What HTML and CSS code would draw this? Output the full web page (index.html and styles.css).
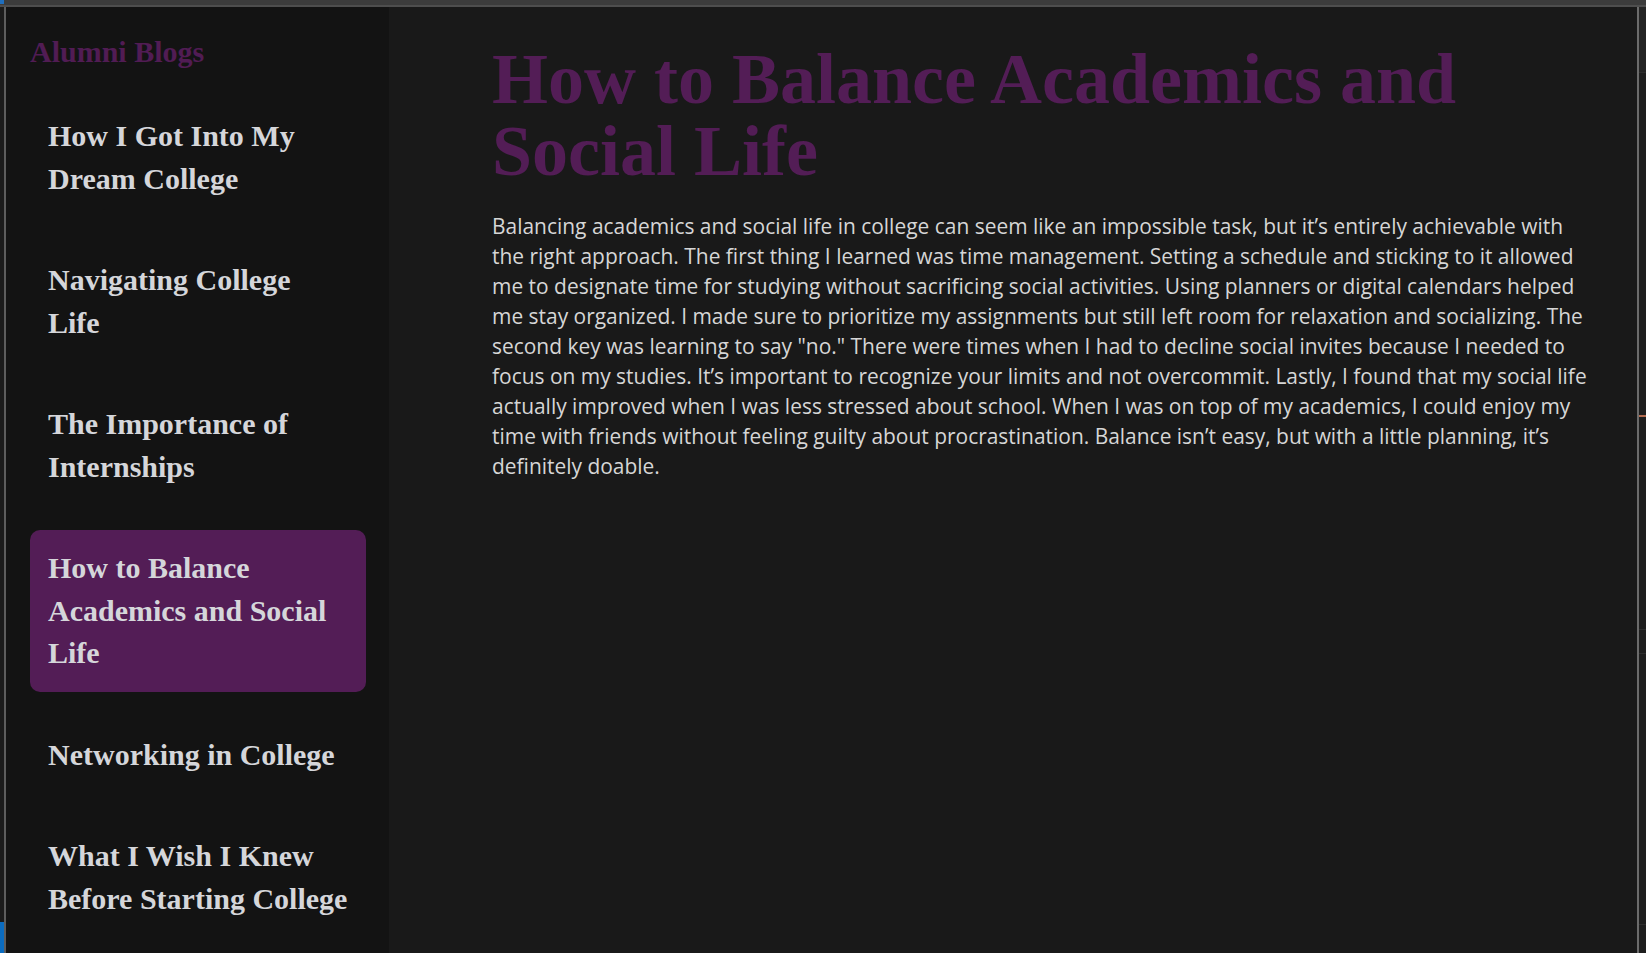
FILE: index.html
```html
<!DOCTYPE html>
<html lang="en">
<head>
<meta charset="utf-8">
<title>Alumni Blogs</title>
<link rel="stylesheet" href="styles.css">
</head>
<body>
<div class="screen">
  <div class="titlebar"><span class="tb-accent"></span></div>
  <div class="window">
    <div class="edge-left"><div class="edge-fill"></div><div class="edge-blue"></div></div>
    <div class="edge-line"></div>
    <aside class="sidebar">
      <h2 class="brand">Alumni Blogs</h2>
      <nav class="posts">
        <a class="post-link" href="#">How I Got Into My Dream College</a>
        <a class="post-link" href="#">Navigating College Life</a>
        <a class="post-link" href="#">The Importance of Internships</a>
        <a class="post-link active" href="#">How to Balance Academics and Social Life</a>
        <a class="post-link" href="#">Networking in College</a>
        <a class="post-link" href="#">What I Wish I Knew Before Starting College</a>
      </nav>
    </aside>
    <main class="article">
      <h1 class="article-title">How to Balance Academics and Social Life</h1>
      <p class="article-body">Balancing academics and social life in college can seem like an impossible task, but it’s entirely achievable with the right approach. The first thing I learned was time management. Setting a schedule and sticking to it allowed me to designate time for studying without sacrificing social activities. Using planners or digital calendars helped me stay organized. I made sure to prioritize my assignments but still left room for relaxation and socializing. The second key was learning to say "no." There were times when I had to decline social invites because I needed to focus on my studies. It’s important to recognize your limits and not overcommit. Lastly, I found that my social life actually improved when I was less stressed about school. When I was on top of my academics, I could enjoy my time with friends without feeling guilty about procrastination. Balance isn’t easy, but with a little planning, it’s definitely doable.</p>
    </main>
    <div class="edge-right">
      <div class="edge-right-line"></div>
      <div class="edge-right-fill">
        <div class="er-top"></div>
        <div class="er-rule"></div>
        <div class="er-gap er-gap-1"></div>
        <div class="er-tick"></div>
        <div class="er-gap er-gap-2"></div>
        <div class="er-rule"></div>
        <div class="er-gap er-gap-3"></div>
        <div class="er-rule"></div>
        <div class="er-gap er-gap-4"></div>
        <div class="er-rule"></div>
      </div>
    </div>
  </div>
</div>
</body>
</html>
```

FILE: styles.css
```css
html, body {
  margin: 0;
  padding: 0;
  height: 100%;
  overflow: hidden;
  background: #1e1e1e;
}

.screen {
  display: flex;
  flex-direction: column;
  height: 953px;
}

.titlebar {
  height: 7px;
  flex: none;
  display: flex;
  background: linear-gradient(#3c3c3c 0 5px, #4e4e4e 5px 7px);
}

.tb-accent {
  width: 4px;
  height: 4px;
  background: #1f6fbf;
}

.window {
  flex: 1;
  display: flex;
  min-height: 0;
}

.edge-left {
  width: 4px;
  flex: none;
  display: flex;
  flex-direction: column;
  background: #1b1b1b;
}

.edge-fill {
  flex: 1;
}

.edge-blue {
  height: 31px;
  background: #0b6cc0;
}

.edge-line {
  width: 2px;
  flex: none;
  background: #5d5d5d;
}

.sidebar {
  width: 383px;
  flex: none;
  box-sizing: border-box;
  padding: 27px 23px 0 24px;
  background: #131313;
}

.brand {
  margin: 0 0 29px;
  font: bold 30px/35px "Liberation Serif", "Times New Roman", serif;
  color: #511c54;
}

.posts {
  display: flex;
  flex-direction: column;
  gap: 25px;
}

.post-link {
  display: block;
  padding: 17px 18px;
  font: bold 30px/42.5px "Liberation Serif", "Times New Roman", serif;
  color: #d5d6da;
  text-decoration: none;
  border-radius: 10px;
}

.post-link.active {
  background: #531d56;
}

.article {
  flex: 1;
  min-width: 0;
  background: #191919;
  padding: 36px 47px 0 103px;
}

.article-title {
  margin: 0 0 24px;
  font: bold 72px/72px "Liberation Serif", "Times New Roman", serif;
  color: #531d56;
}

.article-body {
  margin: 0;
  font: 20.95px/30px "Open Sans", "Noto Sans", sans-serif;
  color: #d6d6d6;
}

.edge-right {
  width: 9px;
  flex: none;
  display: flex;
}

.edge-right-line {
  width: 2px;
  background: #6b6b6b;
}

.edge-right-fill {
  flex: 1;
  display: flex;
  flex-direction: column;
  background: #1e1e1e;
}

.er-top {
  height: 65px;
  background: #242424;
}

.er-rule {
  height: 1px;
  background: #2e2e2e;
}

.er-gap-1 { height: 342px; }
.er-gap-2 { height: 212px; }
.er-gap-3 { height: 23px; }
.er-gap-4 { height: 270px; }

.er-tick {
  height: 2px;
  background: #b36b4f;
}
```
